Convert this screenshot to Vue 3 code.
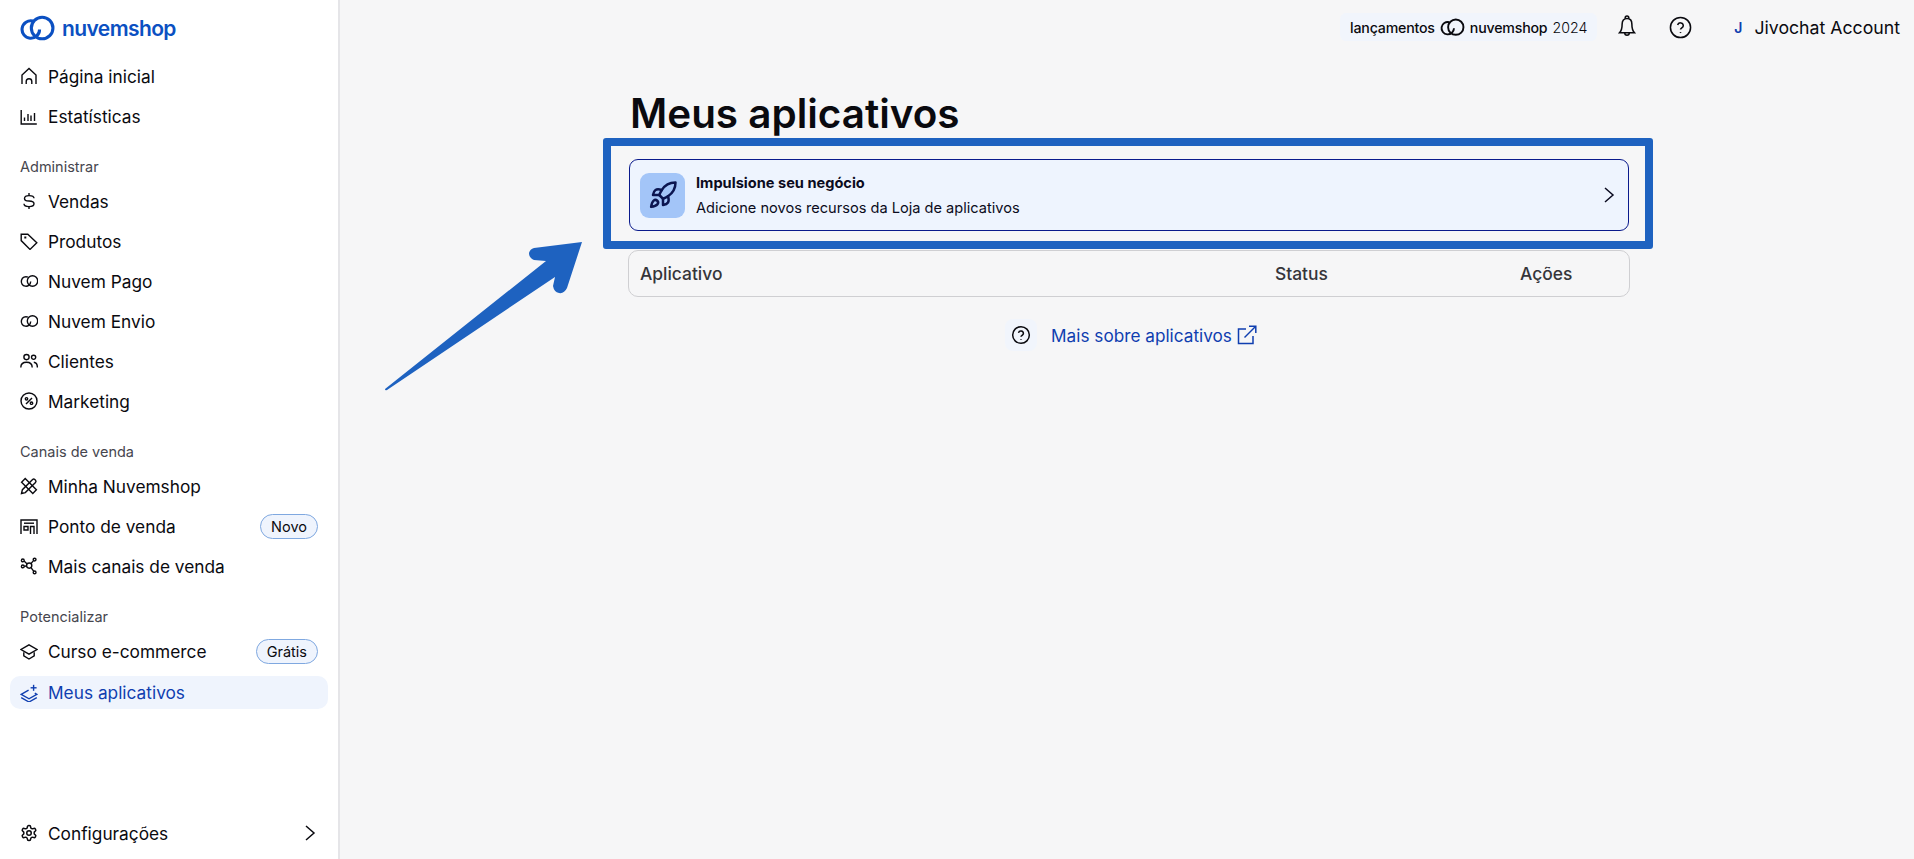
<script setup>
const icons = {
  home: ["M2 17V8L9 1.5 16 8v9", "M6.2 17v-2.5a2.8 2.8 0 0 1 5.6 0V17"],
  stats: ["M1.2 3v14h15.6", "M4.5 14v-3.5", "M8 14V7", "M11 14V8.5", "M14.5 14V6"],
  dollar: ["M14 6.3C14 4.3 12 3.6 9 3.6S4.5 4.6 4.5 6.4 6.3 9 9 9s5 .8 5 2.8-2 2.8-5 2.8-5-.8-5-2.8", "M9 1v2.6", "M9 14.6V17"],
  tag: ["M1.2 2.2h6.6l9 8.6-6.8 6.6-8.8-8.8z", "M5 5.2h.6v.6H5z"],
  cloud: ["M7.9 5.2A4.7 4.7 0 1 0 10.7 9.6", "M12.5 3.8a5.2 5.2 0 1 1 0 10.4 5.2 5.2 0 0 1 0-10.4z"],
  people: ["M6.5 2.5a2.6 2.6 0 1 1 0 5.2 2.6 2.6 0 0 1 0-5.2z", "M13.6 3.2a2.1 2.1 0 1 1 0 4.2 2.1 2.1 0 0 1 0-4.2z", "M.8 15.5c0-3.2 2.4-5.2 5.7-5.2s5.7 2 5.7 5.2", "M13.8 10.2c2.2.2 3.6 2.2 3.6 5.3"],
  percent: ["M9 1a8 8 0 1 1 0 16A8 8 0 0 1 9 1z", "M6 12l6-6", "M6.5 5.6a1.2 1.2 0 1 1 0 2.4 1.2 1.2 0 0 1 0-2.4z", "M11.5 10a1.2 1.2 0 1 1 0 2.4 1.2 1.2 0 0 1 0-2.4z"],
  tools: ["M1.5 16.5l.9-3.8L12.6 2.5a1.6 1.6 0 0 1 2.2 0l.7.7a1.6 1.6 0 0 1 0 2.2L5.3 15.6z", "M5.2 1.6L1.6 5.2l11.2 11.2 3.6-3.6z"],
  store: ["M1 17V3h16v14", "M4 6.2h10", "M4 9.5h4v3.5H4z", "M10.5 17V9.5H14V17"],
  nodes: ["M2.8 2a1.4 1.4 0 1 1 0 2.8 1.4 1.4 0 0 1 0-2.8z", "M2.8 8a1.4 1.4 0 1 1 0 2.8 1.4 1.4 0 0 1 0-2.8z", "M14.6 1.2a1.4 1.4 0 1 1 0 2.8 1.4 1.4 0 0 1 0-2.8z", "M14.6 14a1.4 1.4 0 1 1 0 2.8 1.4 1.4 0 0 1 0-2.8z", "M9.2 6a2.6 2.6 0 1 1 0 5.2 2.6 2.6 0 0 1 0-5.2z", "M4.1 4l3 3", "M4.2 9.3l2.4-.3", "M13.5 3.6l-2.6 3", "M11 10.6l2.8 3.8"],
  cap: ["M9 2.8l8 4.7-8 4.7-8-4.7z", "M3.8 10.2v3.6L9 17l5.2-3.2v-3.6"],
  apps: ["M8.6 6.2L1.2 10.4 9 14.8l7.8-4.4-2-1.2", "M1.2 13.6L9 18l7.8-4.4", "M13.6 .8v6", "M10.6 3.8h6"]
};

const groups = [
  {
    items: [
      { label: "Página inicial", icon: "home" },
      { label: "Estatísticas", icon: "stats" }
    ]
  },
  {
    title: "Administrar",
    items: [
      { label: "Vendas", icon: "dollar" },
      { label: "Produtos", icon: "tag" },
      { label: "Nuvem Pago", icon: "cloud" },
      { label: "Nuvem Envio", icon: "cloud" },
      { label: "Clientes", icon: "people" },
      { label: "Marketing", icon: "percent" }
    ]
  },
  {
    title: "Canais de venda",
    items: [
      { label: "Minha Nuvemshop", icon: "tools" },
      { label: "Ponto de venda", icon: "store", badge: "Novo" },
      { label: "Mais canais de venda", icon: "nodes" }
    ]
  },
  {
    title: "Potencializar",
    items: [
      { label: "Curso e-commerce", icon: "cap", badge: "Grátis" },
      { label: "Meus aplicativos", icon: "apps", active: true }
    ]
  }
];
</script>

<template>
  <div class="page">
    <aside class="sidebar">
      <div class="brand">
        <svg class="brand-logo" viewBox="0 0 34 26" fill="none" stroke="currentColor" stroke-width="3">
          <path d="M12.5 5.7A8.5 8.5 0 1 0 19 14" />
          <circle cx="21.5" cy="12.5" r="10.5" />
        </svg>
        <span>nuvemshop</span>
      </div>

      <nav class="nav">
        <div v-for="(group, g) in groups" :key="g" class="group">
          <div v-if="group.title" class="group-title">{{ group.title }}</div>
          <a v-for="item in group.items" :key="item.label" class="item" :class="{ active: item.active }">
            <svg class="icon" viewBox="0 0 18 18" fill="none" stroke="currentColor" stroke-width="1.4">
              <path v-for="d in icons[item.icon]" :key="d" :d="d" />
            </svg>
            <span class="item-label">{{ item.label }}</span>
            <span v-if="item.badge" class="badge">{{ item.badge }}</span>
          </a>
        </div>
      </nav>

      <a class="item settings">
        <svg class="icon" viewBox="0 0 24 24" fill="none" stroke="currentColor" stroke-width="2">
          <path d="M12.22 2h-.44a2 2 0 0 0-2 2v.18a2 2 0 0 1-1 1.73l-.43.25a2 2 0 0 1-2 0l-.15-.08a2 2 0 0 0-2.73.73l-.22.38a2 2 0 0 0 .73 2.73l.15.1a2 2 0 0 1 1 1.72v.51a2 2 0 0 1-1 1.74l-.15.09a2 2 0 0 0-.73 2.73l.22.38a2 2 0 0 0 2.73.73l.15-.08a2 2 0 0 1 2 0l.43.25a2 2 0 0 1 1 1.73V20a2 2 0 0 0 2 2h.44a2 2 0 0 0 2-2v-.18a2 2 0 0 1 1-1.73l.43-.25a2 2 0 0 1 2 0l.15.08a2 2 0 0 0 2.73-.73l.22-.39a2 2 0 0 0-.73-2.73l-.15-.08a2 2 0 0 1-1-1.74v-.5a2 2 0 0 1 1-1.74l.15-.09a2 2 0 0 0 .73-2.73l-.22-.38a2 2 0 0 0-2.73-.73l-.15.08a2 2 0 0 1-2 0l-.43-.25a2 2 0 0 1-1-1.73V4a2 2 0 0 0-2-2z" />
          <circle cx="12" cy="12" r="3" />
        </svg>
        <span class="item-label">Configurações</span>
        <svg class="chevron" viewBox="0 0 12 18" fill="none" stroke="currentColor" stroke-width="1.5">
          <path d="M2 2l8 7-8 7" />
        </svg>
      </a>
    </aside>

    <div class="content">
      <header class="topbar">
        <div class="launch">
          <span class="launch-strong">lançamentos</span>
          <svg class="launch-logo" viewBox="0 0 34 26" fill="none" stroke="currentColor" stroke-width="2.6">
            <path d="M12.5 5.7A8.5 8.5 0 1 0 19 14" />
            <circle cx="21.5" cy="12.5" r="10.5" />
          </svg>
          <span class="launch-strong">nuvemshop</span>
          <span class="launch-year">2024</span>
        </div>
        <svg class="bell" viewBox="0 0 20 26" fill="none" stroke="currentColor" stroke-width="1.7">
          <path d="M10 3.5c-3.5 0-5.4 2.7-5.4 6.2 0 5.2-.8 7.6-2.9 9.8h16.6c-2.1-2.2-2.9-4.6-2.9-9.8 0-3.5-1.9-6.2-5.4-6.2z" />
          <path d="M8 3.6V2.8a2 2 0 0 1 4 0v.8" />
          <path d="M7.5 19.6a2.5 2.5 0 0 0 5 0" />
        </svg>
        <svg class="help" viewBox="0 0 24 24" fill="none" stroke="currentColor" stroke-width="1.6">
          <circle cx="12" cy="12" r="10.5" />
          <path d="M9 9.4a3 3 0 0 1 5.9.7c0 2-2.9 2.4-2.9 4" />
          <path d="M12 16.8v1" />
        </svg>
        <div class="account">
          <span class="avatar">J</span>
          <span>Jivochat Account</span>
        </div>
      </header>

      <main class="main">
        <h1>Meus aplicativos</h1>

        <div class="promo">
          <span class="promo-frame"></span>
          <div class="promo-icon">
            <svg viewBox="0 0 24 24" fill="none" stroke="currentColor" stroke-width="2" stroke-linecap="round" stroke-linejoin="round">
              <path d="M4.5 16.5c-1.5 1.26-2 5-2 5s3.74-.5 5-2c.71-.84.7-2.13-.09-2.91a2.18 2.18 0 0 0-2.91-.09z" />
              <path d="m12 15-3-3a22 22 0 0 1 2-3.95A12.88 12.88 0 0 1 22 2c0 2.72-.78 7.5-6 11a22.35 22.35 0 0 1-4 2z" />
              <path d="M9 12H4s.55-3.03 2-4c1.62-1.08 5 0 5 0" />
              <path d="M12 15v5s3.03-.55 4-2c1.08-1.62 0-5 0-5" />
            </svg>
          </div>
          <div class="promo-text">
            <strong>Impulsione seu negócio</strong>
            <span>Adicione novos recursos da Loja de aplicativos</span>
          </div>
          <svg class="promo-chevron" viewBox="0 0 12 18" fill="none" stroke="currentColor" stroke-width="1.5">
            <path d="M2 2l8 7-8 7" />
          </svg>
        </div>

        <div class="table-head">
          <span>Aplicativo</span>
          <span>Status</span>
          <span>Ações</span>
        </div>

        <div class="more">
          <span class="more-help">
            <svg viewBox="0 0 24 24" fill="none" stroke="currentColor" stroke-width="1.8">
              <circle cx="12" cy="12" r="10" />
              <path d="M9 9.4a3 3 0 0 1 5.9.7c0 2-2.9 2.4-2.9 4" />
              <path d="M12 16.8v1" />
            </svg>
          </span>
          <a class="more-link">Mais sobre aplicativos</a>
          <svg class="more-ext" viewBox="0 0 20 20" fill="none" stroke="currentColor" stroke-width="1.5">
            <path d="M9 4H1.5v14.5h14.5V11" />
            <path d="M7.5 12.5L18.5 1.5" />
            <path d="M12 1.2h6.8V8" />
          </svg>
        </div>
      </main>
    </div>

    <svg class="arrow" viewBox="0 0 204 156" width="204" height="156">
      <path d="M2 152 L163 24 L151 23 Q146 21 146 16 Q147 12 151 11 L199 5 L184 51 Q181 57 176 56 Q171 55 170 49 L172 40 L4 153 Q2 154 2 152 Z" fill="#1e62c0" />
    </svg>
  </div>
</template>

<style>
* {
  box-sizing: border-box;
}
</style>

<style scoped>
.page {
  position: relative;
  display: flex;
  height: 859px;
  overflow: hidden;
  background: #f6f6f7;
  color: #0a0a0f;
  font-family: Inter, "Liberation Sans", sans-serif;
}

.sidebar {
  display: flex;
  flex-direction: column;
  flex: 0 0 340px;
  padding: 0 10px;
  background: #fff;
  border-right: 2px solid #e5e5e8;
}

.brand {
  display: flex;
  align-items: center;
  gap: 7px;
  height: 56px;
  padding-left: 10px;
  color: #0b50c2;
  font-size: 21px;
  font-weight: 600;
  letter-spacing: -0.6px;
}

.brand-logo {
  width: 35px;
  height: 27px;
}

.nav {
  display: flex;
  flex-direction: column;
  gap: 15px;
  flex: 1;
}

.group-title {
  height: 30px;
  padding: 6px 0 0 10px;
  font-size: 14.5px;
  line-height: 20px;
  color: #46464e;
}

.item {
  display: flex;
  align-items: center;
  height: 40px;
  padding: 0 10px;
  border-radius: 10px;
  font-size: 17.3px;
}

.item.active {
  height: 33px;
  margin-top: 5px;
  color: #0f3eb0;
  background: #eff4fd;
}

.icon {
  flex: none;
  width: 18px;
  height: 18px;
  margin-right: 10px;
}

.item-label {
  flex: 1;
}

.badge {
  padding: 0 10px;
  height: 25px;
  line-height: 23px;
  border: 1px solid #7fa8e0;
  border-radius: 13px;
  background: #eff4fd;
  font-size: 14.5px;
}

.settings {
  margin-bottom: 6px;
}

.chevron {
  width: 12px;
  height: 18px;
  margin-right: 2px;
}

.content {
  flex: 1;
  display: flex;
  flex-direction: column;
}

.topbar {
  display: flex;
  align-items: center;
  justify-content: flex-end;
  height: 54px;
  padding-right: 14px;
}

.launch {
  display: flex;
  align-items: center;
  gap: 5px;
  height: 28px;
  padding: 0 10px;
  margin-right: 21px;
  background: #f1f5fc;
  border-radius: 6px;
  font-size: 14.2px;
}

.launch-strong {
  font-weight: 500;
  letter-spacing: -0.2px;
}

.launch-logo {
  width: 25px;
  height: 19px;
}

.launch-year {
  font-weight: 300;
}

.bell {
  flex: none;
  width: 18px;
  height: 24px;
  margin-right: 33px;
}

.help {
  flex: none;
  width: 23px;
  height: 23px;
  margin-right: 42px;
}

.account {
  display: flex;
  align-items: center;
  gap: 12px;
  font-size: 17.7px;
}

.avatar {
  color: #0f3eb0;
  font-size: 14px;
  font-weight: 600;
}

.main {
  width: 1002px;
  margin-left: 288px;
}

h1 {
  margin: 36px 0 21px 2px;
  font-size: 40.4px;
  line-height: 48px;
  font-weight: 600;
}

.promo {
  position: relative;
  display: flex;
  align-items: center;
  width: 1000px;
  height: 72px;
  margin-left: 1px;
  padding: 0 10px;
  border: 1px solid #0a1a8c;
  border-radius: 9px;
  background: #eef4fe;
}

.promo-frame {
  position: absolute;
  left: -27px;
  right: -25px;
  top: -22px;
  bottom: -19px;
  border: 8px solid #1e62c0;
  border-radius: 3px;
  pointer-events: none;
}

.promo-icon {
  flex: none;
  display: flex;
  align-items: center;
  justify-content: center;
  width: 45px;
  height: 45px;
  margin-right: 11px;
  border-radius: 9px;
  background: #a3c5f8;
  color: #0b1550;
}

.promo-icon svg {
  width: 30px;
  height: 30px;
}

.promo-text {
  flex: 1;
  display: flex;
  flex-direction: column;
  gap: 7px;
  font-size: 14.6px;
  line-height: 18px;
  color: #0b0b20;
}

.promo-text strong {
  font-weight: 700;
}

.promo-chevron {
  width: 12px;
  height: 18px;
  margin-right: 3px;
  color: #0b0b20;
}

.table-head {
  display: grid;
  grid-template-columns: 635px 245px 1fr;
  align-items: center;
  height: 47px;
  margin-top: 19px;
  padding-left: 11px;
  border: 1px solid #cfcfd2;
  border-radius: 10px;
  font-size: 17.4px;
  font-weight: 500;
  color: #35353a;
}

.more {
  display: flex;
  align-items: center;
  justify-content: center;
  height: 40px;
  margin-top: 18px;
  padding-left: 4px;
  color: #0f3eb0;
  font-size: 17.2px;
}

.more-help {
  display: flex;
  align-items: center;
  justify-content: center;
  width: 32px;
  height: 32px;
  margin-right: 14px;
  border-radius: 8px;
  background: #f1f5fc;
  color: #0a0a0f;
}

.more-help svg {
  width: 20px;
  height: 20px;
}

.more-ext {
  width: 20px;
  height: 20px;
  margin-left: 5px;
}

.arrow {
  position: absolute;
  left: 383px;
  top: 237px;
}
</style>
